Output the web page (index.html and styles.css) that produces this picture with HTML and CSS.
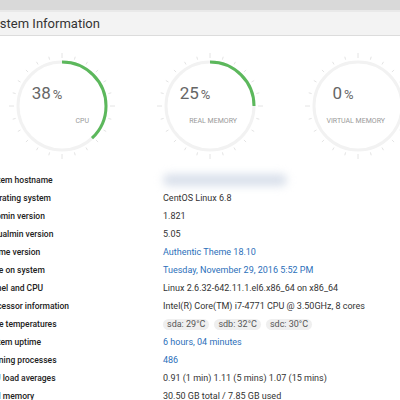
FILE: index.html
```html
<!DOCTYPE html>
<html lang="en">
<head>
    <meta charset="UTF-8">
    <title>System Information</title>
    <link rel="stylesheet" href="styles.css">
</head>
<body>
    <div class="topbar"></div>
    <div class="page">
        <div class="panel-heading">System Information</div>

        <div class="gauges">
            <div class="gauge">
                <svg width="148" height="124" viewBox="0 0 148 124">
                    <g class="ticks"></g>
                    <circle class="track" cx="74" cy="62" r="44"/>
                    <circle class="bar" cx="74" cy="62" r="44" stroke-dasharray="105.06 276.46" transform="rotate(-90 74 62)"/>
                </svg>
                <div class="gauge-value">38<span class="pct">%</span></div>
                <div class="gauge-label">CPU</div>
            </div>
            <div class="gauge">
                <svg width="148" height="124" viewBox="0 0 148 124">
                    <g class="ticks"></g>
                    <circle class="track" cx="74" cy="62" r="44"/>
                    <circle class="bar" cx="74" cy="62" r="44" stroke-dasharray="69.12 276.46" transform="rotate(-90 74 62)"/>
                </svg>
                <div class="gauge-value">25<span class="pct">%</span></div>
                <div class="gauge-label">Real memory</div>
            </div>
            <div class="gauge">
                <svg width="148" height="124" viewBox="0 0 148 124">
                    <g class="ticks"></g>
                    <circle class="track" cx="74" cy="62" r="44"/>
                </svg>
                <div class="gauge-value">0<span class="pct">%</span></div>
                <div class="gauge-label">Virtual memory</div>
            </div>
        </div>

        <table class="info-table">
            <tr><td class="label">System hostname</td><td><div class="blurred"></div></td></tr>
            <tr><td class="label">Operating system</td><td>CentOS Linux 6.8</td></tr>
            <tr><td class="label">Webmin version</td><td>1.821</td></tr>
            <tr><td class="label">Virtualmin version</td><td>5.05</td></tr>
            <tr><td class="label">Theme version</td><td><a href="#">Authentic Theme 18.10</a></td></tr>
            <tr><td class="label">Time on system</td><td><a href="#">Tuesday, November 29, 2016 5:52 PM</a></td></tr>
            <tr><td class="label">Kernel and CPU</td><td>Linux 2.6.32-642.11.1.el6.x86_64 on x86_64</td></tr>
            <tr><td class="label">Processor information</td><td>Intel(R) Core(TM) i7-4771 CPU @ 3.50GHz, 8 cores</td></tr>
            <tr><td class="label">Drive temperatures</td><td><span class="pill">sda: 29°C</span><span class="pill">sdb: 32°C</span><span class="pill">sdc: 30°C</span></td></tr>
            <tr><td class="label">System uptime</td><td><a href="#">6 hours, 04 minutes</a></td></tr>
            <tr><td class="label">Running processes</td><td><a href="#">486</a></td></tr>
            <tr><td class="label">CPU load averages</td><td>0.91 (1 min) 1.11 (5 mins) 1.07 (15 mins)</td></tr>
            <tr><td class="label">Real memory</td><td>30.50 GB total / 7.85 GB used</td></tr>
        </table>
    </div>

    <script src="gauges.js"></script>
</body>
</html>
```

FILE: styles.css
```css
body {
    margin: 0;
    padding: 0;
    font-family: Roboto, 'Noto Sans', sans-serif;
    background: #fff;
    color: #333;
    overflow: hidden;
}

.topbar {
    height: 10px;
    background: #d9d9d9;
    border-bottom: 2px solid #e9e9e9;
}

.page {
    margin-left: -16px;
}

.panel-heading {
    height: 23px;
    line-height: 23px;
    padding-left: 2px;
    font-size: 13px;
    color: #333;
    background: #f3f3f3;
    border-bottom: 1px solid #dcdcdc;
}

.gauges {
    display: flex;
    padding-left: 4px;
    margin-top: 8px;
}

.gauge {
    position: relative;
    width: 148px;
    height: 124px;
}

.gauge svg {
    display: block;
}

.track {
    fill: none;
    stroke: #f2f2f2;
    stroke-width: 3;
}

.bar {
    fill: none;
    stroke: #5cb85c;
    stroke-width: 3;
}

.ticks line {
    stroke: #e4e4e4;
    stroke-width: 1;
}

.gauge-value {
    position: absolute;
    left: 0;
    top: 41px;
    width: 118px;
    text-align: center;
    font-size: 17px;
    line-height: 17px;
    color: #666;
}

.gauge-value .pct {
    font-size: 13px;
    margin-left: 2px;
}

.gauge-label {
    position: absolute;
    right: 47px;
    top: 74px;
    font-size: 7px;
    line-height: 7px;
    text-transform: uppercase;
    color: #999;
}

.info-table {
    border-collapse: collapse;
    margin-top: 3px;
    font-size: 9px;
}

.info-table td {
    height: 18px;
    padding: 0;
    white-space: nowrap;
    vertical-align: middle;
}

.info-table td.label {
    width: 179px;
    font-size: 8.5px;
    font-weight: 500;
    color: #222;
}

.info-table a {
    color: #2c6fba;
    text-decoration: none;
}

.blurred {
    width: 124px;
    height: 12px;
    background: #d9e0eb;
    border-radius: 6px;
    filter: blur(4px);
}

.pill {
    display: inline-block;
    background: #efefef;
    color: #555;
    border-radius: 6px;
    padding: 1px 4px;
    line-height: 9px;
    margin-right: 5px;
}
```

FILE: gauges.js
```js
// draw the little tick marks round every gauge
document.querySelectorAll('.ticks').forEach(function (g) {
    for (var i = 0; i < 24; i++) {
        var a = i * Math.PI / 12;
        var major = i % 6 === 0;
        var r1 = 48, r2 = major ? 53 : 51;
        var line = document.createElementNS('http://www.w3.org/2000/svg', 'line');
        line.setAttribute('x1', 74 + r1 * Math.sin(a));
        line.setAttribute('y1', 62 - r1 * Math.cos(a));
        line.setAttribute('x2', 74 + r2 * Math.sin(a));
        line.setAttribute('y2', 62 - r2 * Math.cos(a));
        g.appendChild(line);
    }
});
```
